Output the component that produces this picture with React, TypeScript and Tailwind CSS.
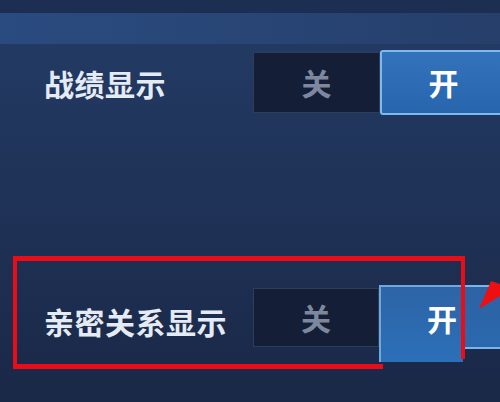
import React from 'react'

const cjk = { fontFamily: '"Noto Sans CJK SC", "Noto Sans", sans-serif' }

function OffCell({ className = '' }: { className?: string }) {
  return (
    <div
      className={
        'flex items-center justify-center shrink-0 bg-[#141e37] border border-[#2c3c5a] text-[30px] font-bold text-[#7d889e] ' +
        className
      }
    >
      关
    </div>
  )
}

export default function App() {
  return (
    <div
      style={cjk}
      className="relative w-[500px] h-[402px] overflow-hidden bg-gradient-to-b from-[#233c66] via-[#1f3257] to-[#1a2847]"
    >
      {/* top header strip */}
      <div className="h-[13px] bg-[#1c2e52]" />
      <div className="h-[31px] bg-gradient-to-r from-[#2a4b80] to-[#263f6b]" />

      {/* row 1: 战绩显示 */}
      <div className="flex items-center mt-[6px] h-[65px]">
        <div className="shrink-0 w-[253px] pl-[44px] pt-[2px] text-[30px] font-bold text-[#e4ebf5] tracking-[0.5px]">
          战绩显示
        </div>
        <OffCell className="w-[127px] h-[61px]" />
        <div className="flex items-center justify-center shrink-0 w-[127px] h-[65px] rounded-[3px] border-2 border-[#7cbaf0] bg-gradient-to-b from-[#3373bc] to-[#2766ad] text-[30px] font-bold text-white">
          开
        </div>
      </div>

      {/* row 2: 亲密关系显示 */}
      <div className="flex items-start mt-[170px]">
        <div className="shrink-0 w-[253px] pl-[44px] pt-[14px] text-[30px] font-bold text-[#e4ebf5] tracking-[0.5px]">
          亲密关系显示
        </div>
        <OffCell className="w-[126px] h-[59px] mt-[3px]" />
        <div className="flex items-center justify-end shrink-0 w-[84px] h-[77px] pr-[6px] pb-[12px] border-l-2 border-t-2 border-[#6fa8dd] bg-gradient-to-b from-[#2d64a6] to-[#2b70b8] text-[30px] font-bold text-white">
          开
        </div>
        <div className="shrink-0 w-[40px] h-[64px] border-t-2 border-b-2 border-[#7ab6ea] bg-gradient-to-b from-[#2c63a4] to-[#2a68ad]" />
      </div>

      {/* red annotation */}
      <div className="absolute left-[13px] top-[256px] w-[452px] h-[5px] bg-[#ea0d17]" />
      <div className="absolute left-[13px] top-[256px] w-[4px] h-[113px] bg-[#ea0d17]" />
      <div className="absolute left-[461px] top-[256px] w-[4px] h-[103px] bg-[#ea0d17]" />
      <div className="absolute left-[13px] top-[364px] w-[370px] h-[5px] bg-[#ea0d17]" />
      <svg className="absolute left-0 top-0" width="500" height="402" viewBox="0 0 500 402">
        <polygon points="479,309 491,281 500,284 500,296" fill="#ee1010" />
      </svg>
    </div>
  )
}
